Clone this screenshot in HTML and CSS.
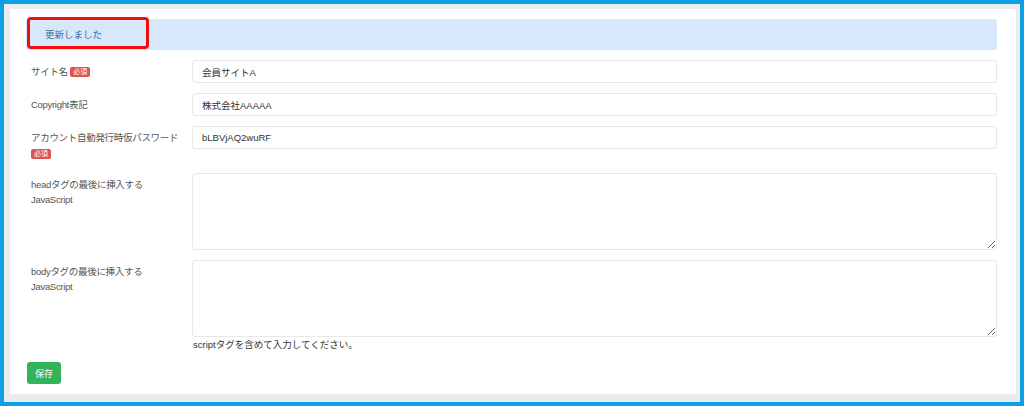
FILE: index.html
```html
<!DOCTYPE html>
<html lang="ja">
<head>
  <meta charset="UTF-8">
  <title>サイト設定</title>
  <link rel="stylesheet" href="styles.css">
</head>
<body>

  <div class="page">
    <div class="card">

      <!-- 完了メッセージ -->
      <div class="alert">
        更新しました
        <span class="mark"></span>
      </div>

      <form class="settings">
        <div class="form-row">
          <label class="form-label">サイト名 <span class="badge">必須</span></label>
          <input type="text" class="form-input" value="会員サイトA">
        </div>

        <div class="form-row">
          <label class="form-label">Copyright表記</label>
          <input type="text" class="form-input" value="株式会社AAAAA">
        </div>

        <div class="form-row">
          <label class="form-label">アカウント自動発行時仮パスワード<span class="badge badge-block">必須</span></label>
          <input type="text" class="form-input" value="bLBVjAQ2wuRF">
        </div>

        <div class="form-row">
          <label class="form-label">headタグの最後に挿入する<br>JavaScript</label>
          <textarea class="form-textarea"></textarea>
        </div>

        <div class="form-row form-row-last">
          <label class="form-label">bodyタグの最後に挿入する<br>JavaScript</label>
          <div class="field">
            <textarea class="form-textarea"></textarea>
            <p class="help">scriptタグを含めて入力してください。</p>
          </div>
        </div>

        <button type="button" class="save-btn">保存</button>
      </form>

    </div>
  </div>

</body>
</html>
```

FILE: styles.css
```css
html, body {
  height: 100%;
}

body {
  margin: 0;
  background-color: #0ba0e6;
  padding: 4px;
  box-sizing: border-box;
  font-family: "Liberation Sans", "Noto Sans CJK JP", sans-serif;
  font-size: 9.5px;
  color: #555;
}

.page {
  height: 100%;
  box-sizing: border-box;
  background-color: #e9ecef;
  padding: 5px 4px 8px 6px;
}

.card {
  height: 100%;
  box-sizing: border-box;
  background-color: #fff;
  padding: 10px 19px 10px 16px;
}

.alert {
  position: relative;
  height: 31px;
  line-height: 31px;
  padding-left: 19px;
  background-color: #d7e8fd;
  border-radius: 3px;
  color: #41679f;
}

/* 赤枠の注釈 */
.mark {
  position: absolute;
  left: 1px;
  top: -2px;
  width: 122px;
  height: 32px;
  box-sizing: border-box;
  border: 3.5px solid #f20d0d;
  border-radius: 4px;
}

.settings {
  margin-top: 10px;
}

.form-row {
  display: grid;
  grid-template-columns: 166px 1fr;
  align-items: start;
  margin-bottom: 10px;
}

.form-row-last {
  margin-bottom: 10px;
}

.form-label {
  padding: 4px 0 4px 5px;
  line-height: 15px;
  letter-spacing: -0.3px;
}

.badge {
  display: inline-block;
  height: 10px;
  line-height: 10px;
  padding: 0 3px;
  border-radius: 2px;
  background-color: #e05252;
  color: #fff;
  font-size: 7px;
  letter-spacing: 0;
  vertical-align: 1px;
}

.badge-block {
  display: block;
  width: max-content;
  margin-top: 4px;
}

.form-input,
.form-textarea {
  width: 100%;
  box-sizing: border-box;
  border: 1px solid #e8e8e8;
  border-radius: 3px;
  font-family: inherit;
  font-size: 9.5px;
  color: #333;
  background-color: #fff;
}

.form-input {
  height: 23px;
  padding: 0 9px;
}

.form-textarea {
  display: block;
  height: 77px;
  padding: 5px 9px;
  resize: vertical;
}

.help {
  margin: 0;
  padding-left: 1px;
  line-height: 15px;
  color: #333;
}

.save-btn {
  display: block;
  width: 34px;
  height: 22px;
  margin-left: 1px;
  padding: 0;
  border: none;
  border-radius: 3px;
  background-color: #33b35a;
  color: #fff;
  font-family: inherit;
  font-size: 9px;
  cursor: pointer;
}
```
